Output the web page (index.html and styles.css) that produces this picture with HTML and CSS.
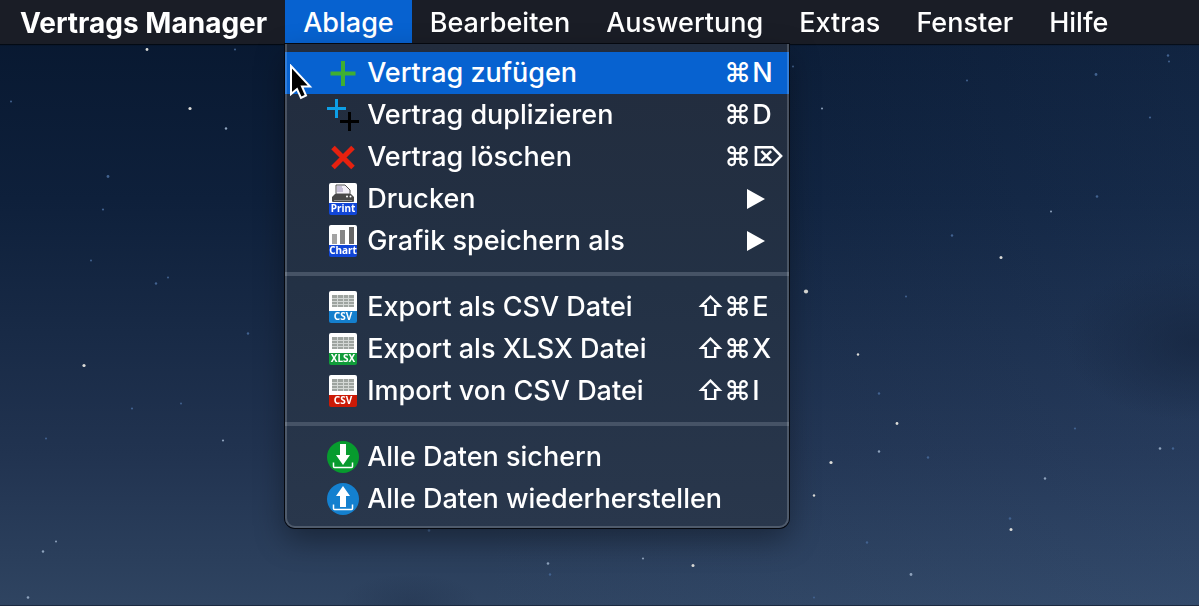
FILE: index.html
```html
<!DOCTYPE html>
<html lang="de">
<head>
    <meta charset="UTF-8">
    <meta name="viewport" content="width=device-width, initial-scale=1.0">
    <title>Vertrags Manager</title>
    <link rel="stylesheet" href="styles.css">
</head>
<body>
    <!-- Sternenhimmel -->
    <svg class="sky" viewBox="0 0 1199 606" preserveAspectRatio="xMidYMid slice" aria-hidden="true">
        <defs>
            <linearGradient id="night" x1="0" y1="0" x2="0" y2="1">
                <stop offset="0" stop-color="#07172f"/>
                <stop offset="0.33" stop-color="#0e203b"/>
                <stop offset="0.55" stop-color="#182a46"/>
                <stop offset="0.75" stop-color="#213350"/>
                <stop offset="1" stop-color="#2f4461"/>
            </linearGradient>
            <linearGradient id="glow" x1="0" y1="0" x2="1" y2="0">
                <stop offset="0.4" stop-color="#5078b4" stop-opacity="0"/>
                <stop offset="1" stop-color="#5078b4" stop-opacity="0.12"/>
            </linearGradient>
            <radialGradient id="cloud">
                <stop offset="0" stop-color="#14233c" stop-opacity="0.6"/>
                <stop offset="1" stop-color="#14233c" stop-opacity="0"/>
            </radialGradient>
        </defs>
        <rect width="1199" height="606" fill="url(#night)"/>
        <rect width="1199" height="606" fill="url(#glow)"/>
        <ellipse cx="1195" cy="342" rx="130" ry="80" fill="url(#cloud)"/>
        <ellipse cx="410" cy="604" rx="70" ry="30" fill="url(#cloud)" opacity="0.4"/>
        <g fill="#dcdcd8">
            <circle cx="147" cy="50" r="1.4"/>
            <circle cx="190" cy="109" r="1.6"/>
            <circle cx="84" cy="366" r="1.6"/>
            <circle cx="806" cy="292" r="2.1"/>
            <circle cx="1001" cy="258" r="1.5"/>
            <circle cx="858" cy="355" r="1.2"/>
            <circle cx="897" cy="424" r="1.4"/>
            <circle cx="831" cy="463" r="1.6"/>
            <circle cx="814" cy="496" r="1.2"/>
            <circle cx="1011" cy="530" r="1.5"/>
            <circle cx="693" cy="566" r="1.5"/>
        </g>
        <g fill="#8fa3bd">
            <circle cx="226" cy="129" r="1.2"/>
            <circle cx="223" cy="441" r="1.1"/>
            <circle cx="43" cy="552" r="1.2"/>
            <circle cx="56" cy="542" r="1"/>
            <circle cx="28" cy="598" r="1.3"/>
            <circle cx="822" cy="109" r="1"/>
            <circle cx="1051" cy="212" r="1"/>
            <circle cx="879" cy="452" r="1.2"/>
            <circle cx="1045" cy="479" r="1.2"/>
            <circle cx="1160" cy="449" r="1.3"/>
            <circle cx="911" cy="575" r="1.4"/>
            <circle cx="548" cy="564" r="1.3"/>
            <circle cx="643" cy="559" r="1.1"/>
        </g>
        <g fill="#42628f">
            <circle cx="235" cy="50" r="1"/>
            <circle cx="11" cy="102" r="1"/>
            <circle cx="108" cy="177" r="1.4"/>
            <circle cx="103" cy="210" r="1.1"/>
            <circle cx="91" cy="261" r="1"/>
            <circle cx="168" cy="278" r="1"/>
            <circle cx="156" cy="284" r="1.2"/>
            <circle cx="248" cy="334" r="1.2"/>
            <circle cx="132" cy="409" r="1.1"/>
            <circle cx="181" cy="404" r="1"/>
            <circle cx="46" cy="439" r="1"/>
            <circle cx="793" cy="67" r="1"/>
            <circle cx="967" cy="81" r="1"/>
            <circle cx="1096" cy="75" r="1.4"/>
            <circle cx="1168" cy="56" r="1.2"/>
            <circle cx="1169" cy="62" r="1"/>
            <circle cx="1150" cy="118" r="1.1"/>
            <circle cx="1097" cy="197" r="1.3"/>
            <circle cx="952" cy="236" r="1.2"/>
            <circle cx="906" cy="297" r="1"/>
            <circle cx="879" cy="394" r="1.2"/>
            <circle cx="1075" cy="429" r="1.1"/>
            <circle cx="1173" cy="449" r="1.2"/>
            <circle cx="928" cy="458" r="1.2"/>
            <circle cx="1010" cy="519" r="1.3"/>
            <circle cx="867" cy="543" r="1.2"/>
            <circle cx="429" cy="531" r="1.3"/>
            <circle cx="550" cy="575" r="1.2"/>
            <circle cx="814" cy="598" r="1"/>
        </g>
    </svg>

    <nav class="menubar" aria-label="Menüleiste">
        <button type="button" class="menu-title app-name">Vertrags Manager</button>
        <div class="menu-holder">
            <button type="button" class="menu-title open" aria-haspopup="true" aria-expanded="true">Ablage</button>
            <ul class="menu">
                <li>
                    <button type="button" class="menu-item selected">
                        <svg class="icon" viewBox="0 0 32 32" aria-hidden="true">
                            <path d="M16 4v25M3.500 16.500h25" stroke="#3faf32" stroke-width="4"/>
                        </svg>
                        <span class="label">Vertrag zufügen</span>
                        <span class="keys"><span>⌘</span><span class="key">N</span></span>
                    </button>
                </li>
                <li>
                    <button type="button" class="menu-item">
                        <svg class="icon" viewBox="0 0 32 32" aria-hidden="true">
                            <path d="M9.500 0v19M0 9.500h19" stroke="#0d9fe6" stroke-width="3"/>
                            <path d="M22.500 13v19M13 22.500h19" stroke="#000" stroke-width="3"/>
                        </svg>
                        <span class="label">Vertrag duplizieren</span>
                        <span class="keys"><span>⌘</span><span class="key">D</span></span>
                    </button>
                </li>
                <li>
                    <button type="button" class="menu-item">
                        <svg class="icon" viewBox="0 0 32 32" aria-hidden="true">
                            <path d="M6 6.500l20 20M26 6.500l-20 20" stroke="#e6210f" stroke-width="5"/>
                        </svg>
                        <span class="label">Vertrag löschen</span>
                        <span class="keys"><span>⌘</span><span class="key">⌦</span></span>
                    </button>
                </li>
                <li>
                    <button type="button" class="menu-item" aria-haspopup="true">
                        <svg class="icon" viewBox="0 0 32 32" aria-hidden="true">
                            <path d="M2 20V2q0-2 2-2h24q2 0 2 2v18z" fill="#fff"/>
                            <path d="M9 11V2h9l5 5v4z" fill="#f3f0f8" stroke="#555" stroke-width="1"/>
                            <path d="M10 4h5M10 6h6M10 8h6" stroke="#9b8fb5" stroke-width="1"/>
                            <path d="M8 11h16l3 3v4q0 1-1 1H6q-1 0-1-1v-4z" fill="#484848"/>
                            <path d="M7 17.500h18" stroke="#8a8a8a" stroke-width="1"/>
                            <circle cx="20" cy="13.500" r="1" fill="#fff"/>
                            <circle cx="23.500" cy="13.500" r="1" fill="#fff"/>
                            <path d="M2 20h28v10q0 2-2 2H4q-2 0-2-2z" fill="#1146d8"/>
                            <text class="badge" x="16" y="29">Print</text>
                        </svg>
                        <span class="label">Drucken</span>
                        <svg class="arrow" viewBox="0 0 18 20" aria-hidden="true"><path d="M0 0l18 10L0 20z" fill="#fff"/></svg>
                    </button>
                </li>
                <li>
                    <button type="button" class="menu-item" aria-haspopup="true">
                        <svg class="icon" viewBox="0 0 32 32" aria-hidden="true">
                            <path d="M2 20V2q0-2 2-2h24q2 0 2 2v18z" fill="#fff"/>
                            <path d="M5 9h5v10H5z" fill="#a3a3a3"/>
                            <path d="M13 5h5v14h-5z" fill="#858585"/>
                            <path d="M22 2h5v17h-5z" fill="#666"/>
                            <path d="M2 20h28v10q0 2-2 2H4q-2 0-2-2z" fill="#1146d8"/>
                            <text class="badge" x="16" y="29">Chart</text>
                        </svg>
                        <span class="label">Grafik speichern als</span>
                        <svg class="arrow" viewBox="0 0 18 20" aria-hidden="true"><path d="M0 0l18 10L0 20z" fill="#fff"/></svg>
                    </button>
                </li>
                <li class="separator" role="separator"></li>
                <li>
                    <button type="button" class="menu-item">
                        <svg class="icon" viewBox="0 0 32 32" aria-hidden="true">
                            <path d="M2 20V2q0-2 2-2h24q2 0 2 2v18z" fill="#fff"/>
                            <path d="M5 4h22v12H5z" fill="#9ea4a0"/>
                            <path d="M5 7.500h22M5 10.500h22M5 13.500h22M10.500 4v12M16.500 4v12M21.500 4v12" stroke="#d3d7d5" stroke-width="1"/>
                            <path d="M2 20h28v10q0 2-2 2H4q-2 0-2-2z" fill="#147fcd"/>
                            <text class="badge" x="16" y="29">CSV</text>
                        </svg>
                        <span class="label">Export als CSV Datei</span>
                        <span class="keys"><span>⇧</span><span>⌘</span><span class="key">E</span></span>
                    </button>
                </li>
                <li>
                    <button type="button" class="menu-item">
                        <svg class="icon" viewBox="0 0 32 32" aria-hidden="true">
                            <path d="M2 20V2q0-2 2-2h24q2 0 2 2v18z" fill="#fff"/>
                            <path d="M5 4h22v12H5z" fill="#9ea4a0"/>
                            <path d="M5 7.500h22M5 10.500h22M5 13.500h22M10.500 4v12M16.500 4v12M21.500 4v12" stroke="#d3d7d5" stroke-width="1"/>
                            <path d="M2 20h28v10q0 2-2 2H4q-2 0-2-2z" fill="#109c3a"/>
                            <text class="badge" x="16" y="29">XLSX</text>
                        </svg>
                        <span class="label">Export als XLSX Datei</span>
                        <span class="keys"><span>⇧</span><span>⌘</span><span class="key">X</span></span>
                    </button>
                </li>
                <li>
                    <button type="button" class="menu-item">
                        <svg class="icon" viewBox="0 0 32 32" aria-hidden="true">
                            <path d="M2 20V2q0-2 2-2h24q2 0 2 2v18z" fill="#fff"/>
                            <path d="M5 4h22v12H5z" fill="#9ea4a0"/>
                            <path d="M5 7.500h22M5 10.500h22M5 13.500h22M10.500 4v12M16.500 4v12M21.500 4v12" stroke="#d3d7d5" stroke-width="1"/>
                            <path d="M2 20h28v10q0 2-2 2H4q-2 0-2-2z" fill="#cc1a06"/>
                            <text class="badge" x="16" y="29">CSV</text>
                        </svg>
                        <span class="label">Import von CSV Datei</span>
                        <span class="keys"><span>⇧</span><span>⌘</span><span class="key">I</span></span>
                    </button>
                </li>
                <li class="separator" role="separator"></li>
                <li>
                    <button type="button" class="menu-item">
                        <svg class="icon" viewBox="0 0 32 32" aria-hidden="true">
                            <circle cx="16" cy="16" r="16" fill="#079b2e"/>
                            <path d="M13 3h6v11h4l-7 10-7-10h4z" fill="#fff"/>
                            <path d="M6.500 21.500v4q0 1 1 1h17q1 0 1-1v-4" fill="none" stroke="#fff" stroke-width="1.500"/>
                        </svg>
                        <span class="label">Alle Daten sichern</span>
                    </button>
                </li>
                <li>
                    <button type="button" class="menu-item">
                        <svg class="icon" viewBox="0 0 32 32" aria-hidden="true">
                            <circle cx="16" cy="16" r="16" fill="#1480cf"/>
                            <path d="M13 24h6V13h4L16 3 9 13h4z" fill="#fff"/>
                            <path d="M6.500 21.500v4q0 1 1 1h17q1 0 1-1v-4" fill="none" stroke="#fff" stroke-width="1.500"/>
                        </svg>
                        <span class="label">Alle Daten wiederherstellen</span>
                    </button>
                </li>
            </ul>
            <svg class="cursor" viewBox="0 0 24 36" aria-hidden="true">
                <path d="M2 2v28l6-5 4 9 5-2.500-4-9h8z" fill="#000" stroke="#fff" stroke-width="2"/>
            </svg>
        </div>
        <button type="button" class="menu-title">Bearbeiten</button>
        <button type="button" class="menu-title">Auswertung</button>
        <button type="button" class="menu-title">Extras</button>
        <button type="button" class="menu-title">Fenster</button>
        <button type="button" class="menu-title">Hilfe</button>
    </nav>
</body>
</html>
```
FILE: styles.css
```css
* {
    box-sizing: border-box;
}
body {
    margin: 0;
    min-height: 100vh;
    overflow: hidden;
    background-color: #14253f;
    color: #fff;
    font-family: Inter, "Liberation Sans", sans-serif;
    font-size: 27px;
    font-weight: 500;
}
button {
    border: none;
    background: none;
    color: inherit;
    font: inherit;
    cursor: default;
}
.sky {
    position: fixed;
    inset: 0;
    width: 100%;
    height: 100%;
    border-bottom: 1px solid #1c2a41;
}
.menubar {
    position: relative;
    display: flex;
    height: 44px;
    padding-left: 2px;
    background-color: #1a1d26;
    box-shadow: 0 1px 1px rgba(0, 0, 0, 0.6);
}
.menu-title {
    height: 44px;
    padding: 1px 18px 0;
    line-height: 44px;
    white-space: nowrap;
}
.app-name {
    font-size: 28px;
    font-weight: 700;
}
.open {
    background-color: #0762d0;
}
.menu-holder {
    position: relative;
}

/* Aufgeklapptes Menü */
.menu {
    position: absolute;
    top: 44px;
    left: 0;
    width: 504px;
    margin: 0;
    padding: 8px 0;
    list-style: none;
    background: linear-gradient(#222c3d, #233145 50%, #29374c);
    border-radius: 0 0 10px 10px;
    box-shadow: 0 0 0 1px #05080f, 0 12px 30px rgba(0, 0, 0, 0.35);
}
.menu::after {
    content: "";
    position: absolute;
    inset: 0;
    border: 2px solid rgba(255, 255, 255, 0.18);
    border-top: none;
    border-radius: 0 0 10px 10px;
    pointer-events: none;
}
.menu-item {
    display: flex;
    align-items: center;
    gap: 8px;
    width: 100%;
    height: 42px;
    padding: 0 0 0 42px;
    text-align: left;
    white-space: nowrap;
}
.selected {
    background-color: #0762d0;
}
.label {
    flex: 1;
    padding-bottom: 2px;
}
.icon {
    width: 32px;
    height: 32px;
}
.badge {
    fill: #fff;
    font-family: "Noto Sans", sans-serif;
    font-size: 10px;
    font-weight: 700;
    text-anchor: middle;
}
.keys {
    display: flex;
    padding-bottom: 2px;
}
.keys span {
    width: 28px;
}
.keys .key {
    width: 37px;
}
.arrow {
    width: 18px;
    height: 20px;
    margin-right: 24px;
}
.separator {
    height: 4px;
    margin: 10px 0;
    background-color: #465366;
}
.cursor {
    position: absolute;
    top: 64px;
    left: 4px;
    width: 24px;
    height: 36px;
}
```
